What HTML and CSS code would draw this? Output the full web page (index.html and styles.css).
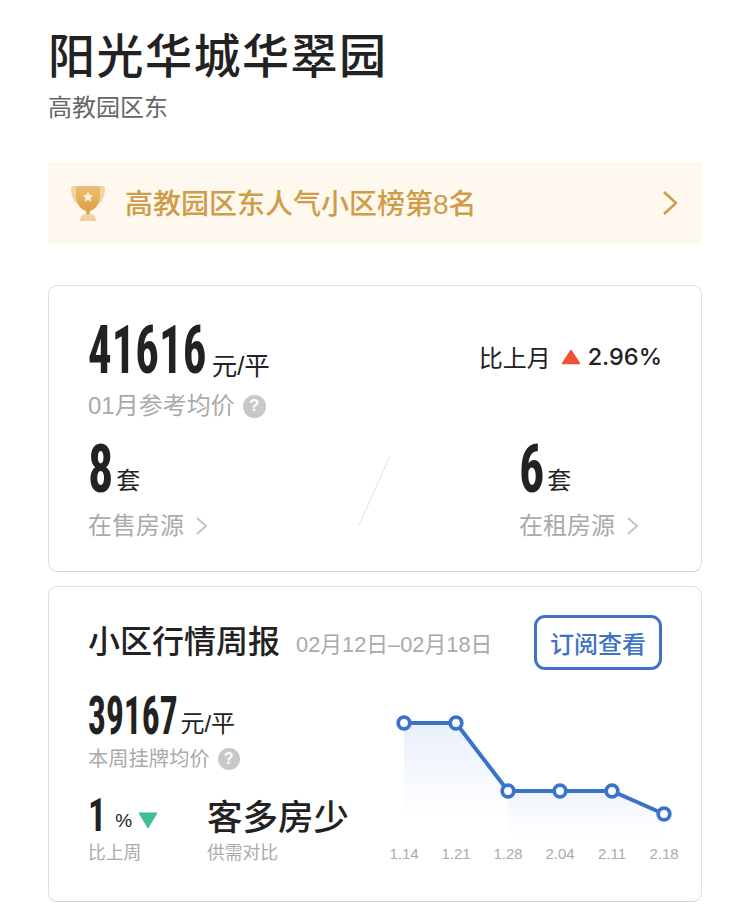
FILE: index.html
```html
<!DOCTYPE html>
<html lang="zh-CN">
    <head>
        <meta charset="utf-8">
        <meta name="viewport" content="width=device-width, initial-scale=1.0">
        <title>阳光华城华翠园</title>
        <link rel="stylesheet" href="styles.css">
    </head>
    <body>
        <div id="wrapper">
            <header>
                <h1>阳光华城华翠园</h1>
                <p class="area">高教园区东</p>
            </header>
            <a class="rank-bar">
                <svg class="trophy" width="36" height="37" viewBox="0 0 36 37">
                    <defs>
                        <linearGradient id="cup" x1="0" y1="0" x2="0" y2="1">
                            <stop offset="0" stop-color="#eebf78"/>
                            <stop offset="1" stop-color="#dc9f45"/>
                        </linearGradient>
                    </defs>
                    <path d="M3 1h30a2 2 0 0 1 2 2c0 9-3 15-10 18H11C4 18 1 12 1 3a2 2 0 0 1 2-2z" fill="#f3d5a4"/>
                    <path d="M6 1h24v10c0 8-5 15-12 15S6 19 6 11z" fill="url(#cup)"/>
                    <path d="M18 6.500l1.600 3.400 3.700.5-2.700 2.600.6 3.700-3.200-1.800-3.200 1.800.6-3.700-2.700-2.600 3.700-.5z" fill="#fdf3dc"/>
                    <rect x="16" y="25" width="4" height="4" fill="#dba655"/>
                    <path d="M10 36c0-4 2-7 5-7h6c3 0 5 3 5 7z" fill="#ecd0a4"/>
                </svg>
                <span class="rank-text">高教园区东人气小区榜第8名</span>
                <svg class="rank-arrow" width="16" height="26" viewBox="0 0 16 26"><path d="M2 2l12 11L2 24" fill="none" stroke="#cf9c48" stroke-width="2.500"/></svg>
            </a>
            <section class="card price-card">
                <div class="price-row">
                    <div>
                        <span class="num num-big">41616</span><span class="unit">元/平</span>
                    </div>
                    <div class="change">
                        比上月
                        <svg class="up" width="20" height="16" viewBox="0 0 20 16"><path d="M10 1.500l8.500 13h-17z" fill="#ee5338" stroke="#ee5338" stroke-width="1.500" stroke-linejoin="round"/></svg>
                        <span class="change-val">2.96%</span>
                    </div>
                </div>
                <div class="label label-price">01月参考均价 <span class="help">?</span></div>
                <div class="listing-row">
                    <div class="listing">
                        <div><span class="num num-mid">8</span><span class="unit-set">套</span></div>
                        <div class="label label-listing">在售房源 <svg class="chev" width="13" height="20" viewBox="0 0 13 20"><path d="M2 2l9 8-9 8" fill="none" stroke="#c4c4c4" stroke-width="2"/></svg></div>
                    </div>
                    <svg class="slash" width="33" height="71" viewBox="0 0 33 71"><path d="M32 1L1 70" stroke="#e8e8e8" stroke-width="1.200"/></svg>
                    <div class="listing listing-rent">
                        <div><span class="num num-mid">6</span><span class="unit-set">套</span></div>
                        <div class="label label-listing">在租房源 <svg class="chev" width="13" height="20" viewBox="0 0 13 20"><path d="M2 2l9 8-9 8" fill="none" stroke="#c4c4c4" stroke-width="2"/></svg></div>
                    </div>
                </div>
            </section>
            <section class="card week-card">
                <div class="week-head">
                    <h2>小区行情周报</h2>
                    <span class="week-date">02月12日–02月18日</span>
                    <button class="sub-btn">订阅查看</button>
                </div>
                <div class="week-body">
                    <div class="week-left">
                        <div class="week-price"><span class="num num-week">39167</span><span class="unit-week">元/平</span></div>
                        <div class="label-small">本周挂牌均价 <span class="help help-small">?</span></div>
                        <div class="week-stats">
                            <div class="stat-ratio">
                                <div class="stat-top"><span class="num num-pct">1</span><span class="pct">%</span><svg class="down" width="20" height="17" viewBox="0 0 20 17"><path d="M1 1h18l-9 15z" fill="#3fc08f" stroke="#3fc08f" stroke-linejoin="round"/></svg></div>
                                <div class="label-mini">比上周</div>
                            </div>
                            <div class="stat-demand">
                                <div class="demand">客多房少</div>
                                <div class="label-mini">供需对比</div>
                            </div>
                        </div>
                    </div>
                    <div class="chart">
                        <svg width="312" height="130" viewBox="0 0 312 130">
                            <defs>
                                <linearGradient id="area" x1="0" y1="0" x2="0" y2="1">
                                    <stop offset="0" stop-color="#e9f0fb"/>
                                    <stop offset="1" stop-color="#ffffff"/>
                                </linearGradient>
                                <linearGradient id="area2" x1="0" y1="0" x2="0" y2="1">
                                    <stop offset="0" stop-color="#eff4fc"/>
                                    <stop offset="1" stop-color="#ffffff"/>
                                </linearGradient>
                            </defs>
                            <path d="M26 15H78L130 83V108H26z" fill="url(#area)"/>
                            <path d="M130 83H234L286 106V128H130z" fill="url(#area2)"/>
                            <polyline points="26,15 78,15 130,83 182,83 234,83 286,106" fill="none" stroke="#3a72cc" stroke-width="4"/>
                            <g fill="#fff" stroke="#3a72cc" stroke-width="3.800">
                                <circle cx="26" cy="15" r="5.800"/>
                                <circle cx="78" cy="15" r="5.800"/>
                                <circle cx="130" cy="83" r="5.800"/>
                                <circle cx="182" cy="83" r="5.800"/>
                                <circle cx="234" cy="83" r="5.800"/>
                                <circle cx="286" cy="106" r="5.800"/>
                            </g>
                        </svg>
                        <div class="chart-dates">
                            <span>1.14</span><span>1.21</span><span>1.28</span><span>2.04</span><span>2.11</span><span>2.18</span>
                        </div>
                    </div>
                </div>
            </section>
        </div>
    </body>
</html>
```

FILE: styles.css
```css
/* page */
*{
    margin: 0;
    padding: 0;
    box-sizing: border-box;
}
body{
    background-color: #fff;
    color: #222;
    font-family: "Liberation Sans", "Noto Sans CJK SC", sans-serif;
}
#wrapper{
    width: 750px;
    height: 913px;
    overflow: hidden;
    padding: 28px 48px 0;
}

/* title */
h1{
    font-size: 47px;
    line-height: 58px;
    font-weight: 500;
    letter-spacing: 1.500px;
}
.area{
    font-size: 24px;
    line-height: 30px;
    margin-top: 7px;
    color: #666;
}

/* rank banner */
.rank-bar{
    display: flex;
    align-items: center;
    height: 82px;
    margin-top: 39px;
    padding: 0 24px 0 22px;
    background-color: #fef8ee;
}
.trophy{
    flex: none;
}
.rank-text{
    margin-left: 19px;
    margin-top: -3px;
    font-size: 28px;
    font-weight: 500;
    color: #cf9c48;
}
.rank-arrow{
    margin-left: auto;
}

/* cards */
.card{
    border: 1px solid #dedede;
    border-bottom-color: #d4d4d4;
    border-radius: 9px;
    padding: 0 39px;
}
.num{
    display: inline-block;
    font-family: "Roboto Condensed", "Liberation Sans Narrow", "Liberation Sans", sans-serif;
    font-weight: 700;
    color: #222;
    transform-origin: left center;
}
.label{
    display: flex;
    align-items: center;
    gap: 8px;
    font-size: 24px;
    line-height: 32px;
    color: #aaa;
}
.help{
    display: inline-flex;
    justify-content: center;
    align-items: center;
    width: 23px;
    height: 23px;
    border-radius: 50%;
    background-color: #c8c8c8;
    color: #fff;
    font-size: 17px;
    font-weight: 700;
}

/* price card */
.price-card{
    height: 287px;
    margin-top: 41px;
}
.price-row{
    display: flex;
    justify-content: space-between;
    align-items: center;
    padding-top: 28px;
    height: 101px;
}
.num-big{
    font-size: 66px;
    line-height: 72px;
    transform: scaleX(.71);
    margin-right: -48px;
}
.unit{
    margin-left: 5px;
    font-size: 25.500px;
    vertical-align: -2px;
}
.change{
    display: flex;
    align-items: center;
    gap: 10px;
    font-size: 24px;
    margin-top: 12px;
}
.change-val{
    margin-left: -3px;
    font-family: "Inter", "Liberation Sans", sans-serif;
    font-weight: 500;
    font-size: 23.500px;
}
.label-price{
    margin-top: 3px;
}
.listing-row{
    display: flex;
    align-items: flex-start;
    margin-top: 12px;
}
.listing{
    width: 270px;
}
.listing-rent{
    width: auto;
    margin-left: 128px;
}
.label-listing{
    margin-top: 4px;
}
.slash{
    margin-top: 21px;
}
.num-mid{
    font-size: 66px;
    line-height: 72px;
    transform: scaleX(.76);
    margin-right: -7px;
}
.unit-set{
    margin-left: 2px;
    font-size: 24px;
    vertical-align: 3px;
}
.chev{
    margin-left: 3px;
}

/* weekly card */
.week-card{
    height: 316px;
    margin-top: 14px;
}
.week-head{
    display: flex;
    align-items: center;
    padding-top: 27px;
}
h2{
    font-size: 32px;
    line-height: 56px;
    font-weight: 500;
}
.week-date{
    margin-left: 16px;
    font-size: 21.800px;
    color: #aaa;
}
.sub-btn{
    margin-left: auto;
    width: 128px;
    height: 55px;
    border: 3px solid #3f74c0;
    border-radius: 11px;
    background-color: #fff;
    color: #3f74c0;
    font-family: inherit;
    font-size: 24px;
    font-weight: 500;
}
.week-body{
    display: flex;
    justify-content: space-between;
}
.week-left{
    padding-top: 20px;
}
.week-price{
    height: 52px;
}
.num-week{
    font-size: 54px;
    line-height: 52px;
    transform: scaleX(.657);
    margin-right: -46px;
}
.unit-week{
    margin-left: 2px;
    font-size: 24px;
    vertical-align: 2px;
}
.label-small{
    display: flex;
    align-items: center;
    gap: 8px;
    margin-top: 4px;
    font-size: 20.300px;
    line-height: 26px;
    color: #aaa;
}
.help-small{
    width: 22px;
    height: 22px;
    font-size: 16px;
}
.week-stats{
    display: flex;
    margin-top: 23px;
}
.stat-ratio{
    width: 119px;
}
.stat-top{
    display: flex;
    align-items: center;
    height: 46px;
    padding-bottom: 6px;
}
.num-pct{
    font-size: 46px;
    transform: scaleX(.78);
    margin-right: -5px;
}
.pct{
    margin-left: 9px;
    margin-right: 6px;
    padding-top: 12px;
    font-size: 19px;
    font-weight: 500;
}
.down{
    margin-top: 10px;
}
.demand{
    font-size: 35.500px;
    line-height: 46px;
    font-weight: 500;
}
.label-mini{
    font-size: 17.800px;
    line-height: 24px;
    color: #aaa;
}

/* chart */
.chart{
    width: 312px;
    margin-right: -28px;
    margin-top: 38px;
}
.chart svg{
    display: block;
}
.chart-dates{
    display: grid;
    grid-template-columns: repeat(6, 52px);
    margin-top: 6px;
    font-size: 15px;
    line-height: 20px;
    color: #aaa;
    text-align: center;
}
```
